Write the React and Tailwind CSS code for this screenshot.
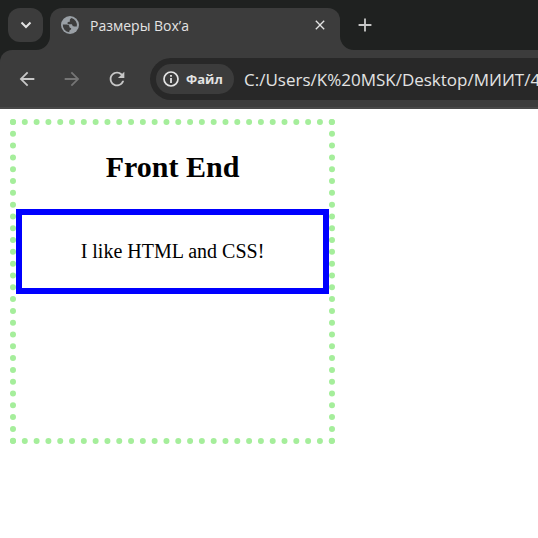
import React from "react";
import { MdArrowBack, MdArrowForward, MdRefresh, MdClose, MdAdd } from "react-icons/md";

function Globe() {
  return (
    <svg viewBox="0 0 18 18" className="size-[18px] shrink-0" aria-hidden="true">
      <circle cx="9" cy="9" r="9" fill="#9aa0a6" />
      <path
        d="M10.6 2.1C9.5 2.7 8.8 3.3 8.8 4.2c0 .8.3 1.2-.3 1.5-.8.3-1.8.2-2 1-.2.9.3 1.5 1.3 1.5h2.4c.9 0 1.2.6 1.3 1.4.1.7.7.9 1.5.9h2.8A7.3 7.3 0 0 0 10.6 2.1Z"
        fill="#3c3c3c"
      />
      <path
        d="M1.8 8.5h3.8c1.7 0 2.8.9 2.8 2.3 0 .8.5 1 1.2 1.1.8.2.7 1 .2 1.6-.7.7-1.5.8-1.5 1.7v1.1A7.3 7.3 0 0 1 1.8 8.5Z"
        fill="#3c3c3c"
      />
    </svg>
  );
}

function Flare({ className }) {
  return (
    <svg viewBox="0 0 14 14" className={className} aria-hidden="true">
      <path d="M14 0v14H0A14 14 0 0 0 14 0Z" fill="#3c3c3c" />
    </svg>
  );
}

function TabStrip() {
  return (
    <div className="flex h-[50px] items-start bg-[#1f2120] pt-2 pl-2">
      <button
        type="button"
        aria-label="Search tabs"
        className="flex h-[34px] w-[35px] shrink-0 items-center justify-center rounded-xl bg-[#3c3c3c] text-[#e3e3e3]"
      >
        <svg viewBox="0 0 12 8" className="h-2 w-3" fill="none" stroke="currentColor" strokeWidth="2" aria-hidden="true">
          <path d="m1.5 1.5 4.5 4.5 4.5-4.5" />
        </svg>
      </button>
      <div className="relative ml-[7px] flex h-[42px] w-[290px] shrink-0 items-start rounded-t-xl bg-[#3c3c3c] pt-2 pr-[11px] pl-[11px]">
        <Flare className="absolute bottom-0 -left-[14px] size-[14px]" />
        <Flare className="absolute -right-[14px] bottom-0 size-[14px] -scale-x-100" />
        <Globe />
        <span className="ml-[11px] flex-1 truncate text-[14px] leading-[20px] text-[#e3e3e3]">Размеры Box’a</span>
        <button type="button" aria-label="Close tab" className="flex size-[18px] items-center justify-center text-[#e3e3e3]">
          <MdClose className="size-4" />
        </button>
      </div>
      <button type="button" aria-label="New tab" className="mt-[6px] ml-[14px] flex size-[22px] items-center justify-center text-[#c7c7c7]">
        <MdAdd className="size-[22px] shrink-0" />
      </button>
    </div>
  );
}

function Toolbar() {
  return (
    <div className="bg-[#1f2120]">
      <div className="flex h-[59px] items-start rounded-tl-xl border-b-2 border-[#484848] bg-[#3c3c3c] pt-2">
        <div className="flex h-[42px] shrink-0 items-center gap-[23px] pr-[22px] pl-[16px] text-[#c7c7c7]">
          <button type="button" aria-label="Back">
            <MdArrowBack className="size-[22px]" />
          </button>
          <button type="button" aria-label="Forward" disabled className="text-[#757575]">
            <MdArrowForward className="size-[22px]" />
          </button>
          <button type="button" aria-label="Reload">
            <MdRefresh className="size-[22px]" />
          </button>
        </div>
        <div className="flex h-[42px] min-w-0 flex-1 items-center rounded-l-full bg-[#282828] pl-[6px]">
          <button type="button" className="flex h-[30px] w-[78px] shrink-0 items-center gap-[7px] rounded-full bg-[#3c3c3c] pl-[7px] text-[#e3e3e3]">
            <svg viewBox="0 0 16 16" className="size-4 shrink-0" fill="none" stroke="currentColor" aria-hidden="true">
              <circle cx="8" cy="8" r="7" strokeWidth="1.7" />
              <path d="M8 7v5M8 4v1.7" strokeWidth="1.8" />
            </svg>
            <span className="text-[13px] leading-[20px] font-bold">Файл</span>
          </button>
          <input
            type="text"
            aria-label="Address"
            readOnly
            value="C:/Users/K%20MSK/Desktop/МИИТ/4"
            className="ml-[10px] h-[30px] min-w-0 flex-1 bg-transparent text-[17px] text-[#e3e3e3] outline-none"
          />
        </div>
      </div>
    </div>
  );
}

export default function App() {
  return (
    <div className="min-h-screen overflow-hidden bg-white">
      <header className="font-['Open_Sans','Noto_Sans',sans-serif]">
        <TabStrip />
        <Toolbar />
      </header>
      <main className="p-[10px] font-['Liberation_Serif','Times_New_Roman',serif] text-black">
        <div className="size-[325px] border-[6px] border-dotted border-[#a5ee9b] text-center">
          <h2 className="my-[25px] text-[30px] leading-[34px] font-bold">Front End</h2>
          <p className="border-[6px] border-[#0000ff] py-[25px] text-[20px] leading-[23px]">I like HTML and CSS!</p>
        </div>
      </main>
    </div>
  );
}
